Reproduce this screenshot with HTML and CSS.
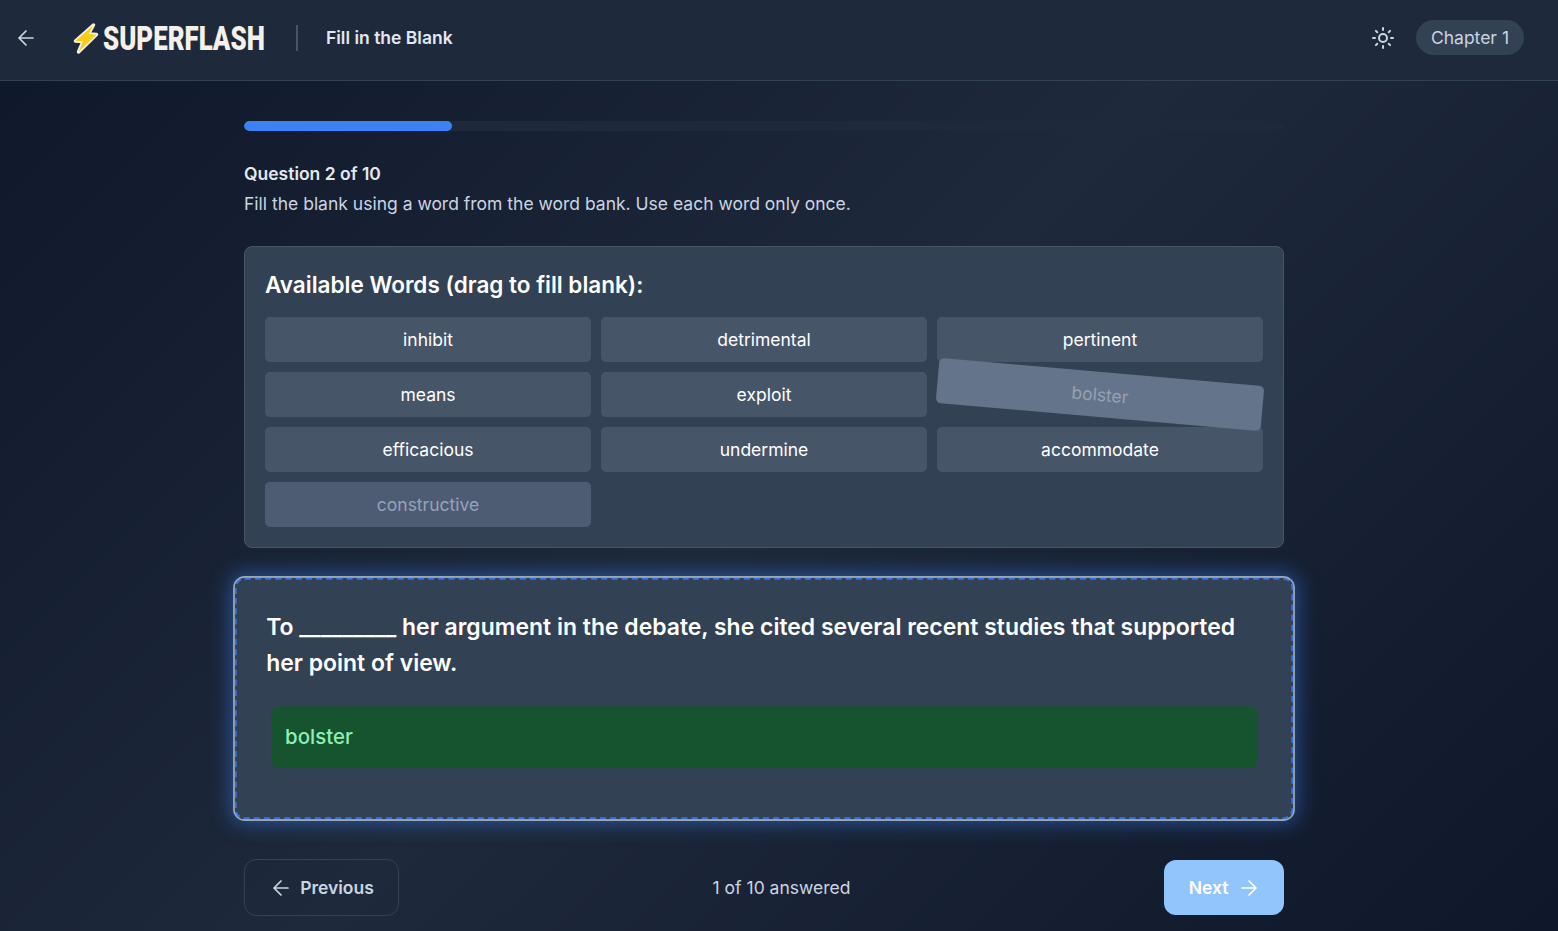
FILE: index.html
```html
<!DOCTYPE html>
<html lang="en">
<head>
<meta charset="utf-8">
<title>Fill in the Blank</title>
<link rel="stylesheet" href="styles.css">
</head>
<body>
<header class="topbar">
  <div class="topbar-left">
    <svg class="back-icon" viewBox="0 0 24 24" width="24" height="24"><path d="M19 12H5M12 19l-7-7 7-7"/></svg>
    <div class="logo">
      <svg class="bolt" viewBox="0 0 28 34" width="28" height="34"><path class="bolt-shape" d="M21.500 4 L3.500 20 L11 20.500 L6.500 31 L24.500 13.500 L16.500 13 Z"/></svg>
      <span class="logo-text">SUPERFLASH</span>
    </div>
    <span class="divider"></span>
    <span class="page-title">Fill in the Blank</span>
  </div>
  <div class="topbar-right">
    <svg class="sun-icon" viewBox="0 0 24 24" width="24" height="24"><circle cx="12" cy="12" r="4"/><path d="M12 2v2M12 20v2M4.900 4.900l1.400 1.400M17.700 17.700l1.400 1.400M2 12h2M20 12h2M6.300 17.700l-1.400 1.400M19.100 4.900l-1.400 1.400"/></svg>
    <span class="chapter">Chapter 1</span>
  </div>
</header>
<main class="content">
  <div class="progress"><div class="progress-fill"></div></div>
  <div class="question-head">
    <div class="question-num">Question 2 of 10</div>
    <div class="question-help">Fill the blank using a word from the word bank. Use each word only once.</div>
  </div>
  <section class="bank">
    <h2 class="bank-title">Available Words (drag to fill blank):</h2>
    <div class="word-grid">
      <div class="word">inhibit</div>
      <div class="word">detrimental</div>
      <div class="word">pertinent</div>
      <div class="word">means</div>
      <div class="word">exploit</div>
      <div class="word word-dragging">bolster</div>
      <div class="word">efficacious</div>
      <div class="word">undermine</div>
      <div class="word">accommodate</div>
      <div class="word word-used">constructive</div>
    </div>
  </section>
  <section class="dropzone">
    <p class="sentence">To _________ her argument in the debate, she cited several recent studies that supported her point of view.</p>
    <div class="answer">bolster</div>
  </section>
  <nav class="actions">
    <button class="btn btn-prev"><svg viewBox="0 0 24 24" width="24" height="24"><path d="M19 12H5M12 19l-7-7 7-7"/></svg>Previous</button>
    <span class="answered">1 of 10 answered</span>
    <button class="btn btn-next">Next<svg viewBox="0 0 24 24" width="24" height="24"><path d="M5 12h14M12 5l7 7-7 7"/></svg></button>
  </nav>
</main>
</body>
</html>
```
FILE: styles.css
```css
* { box-sizing: border-box; }
html, body { margin: 0; height: 100%; overflow: hidden; }
body {
  font-family: Inter, "Liberation Sans", sans-serif;
  background: linear-gradient(135deg, #0f172a 0%, #1e293b 50%, #0f172a 100%);
  color: #fff;
}
.topbar {
  height: 81px;
  display: flex;
  align-items: center;
  justify-content: space-between;
  padding: 0 34px 5px 14px;
  background: #1e293b;
  border-bottom: 1px solid #334155;
}
.topbar-left, .topbar-right { display: flex; align-items: center; }
.back-icon { fill: none; stroke: #cbd5e1; stroke-width: 1.700; stroke-linecap: round; stroke-linejoin: round; }
.logo { display: flex; align-items: center; margin-left: 34px; width: 194px; }
.bolt { flex: none; }
.bolt-shape { fill: #facc15; stroke: #f5f0e8; stroke-width: 3.500; stroke-linejoin: round; paint-order: stroke; }
.logo-text {
  font-family: Roboto, sans-serif;
  font-weight: 900;
  font-size: 34px;
  color: #f5f0e8;
  transform: scaleX(0.76);
  transform-origin: left center;
  margin-left: 3px;
  white-space: nowrap;
}
.divider { width: 2px; height: 26px; background: #475569; margin-left: 30px; }
.page-title { font-size: 17.500px; font-weight: 600; color: #e2e8f0; margin-left: 28px; }
.sun-icon { fill: none; stroke: #cbd5e1; stroke-width: 2; stroke-linecap: round; margin-right: 21px; }
.chapter {
  height: 35px;
  padding: 0 15px;
  display: flex;
  align-items: center;
  border-radius: 18px;
  background: #334155;
  color: #cbd5e1;
  font-size: 17.500px;
}
.content { width: 1040px; margin: 0 0 0 244px; padding-top: 40px; }
.progress { height: 10px; border-radius: 5px; background: #1e293b; overflow: hidden; }
.progress-fill { width: 20%; height: 100%; background: #3b82f6; border-radius: 5px; }
.question-head { margin-top: 31px; }
.question-num { font-size: 17.500px; font-weight: 600; color: #e2e8f0; line-height: 24px; }
.question-help { font-size: 17.500px; color: #cbd5e1; line-height: 24px; margin-top: 6px; }
.bank {
  margin-top: 30px;
  height: 302px;
  padding: 20px;
  background: #334155;
  border: 1px solid #475569;
  border-radius: 8px;
}
.bank-title { margin: 0 0 14px; font-size: 22.500px; font-weight: 600; line-height: 36px; }
.word-grid { display: grid; grid-template-columns: repeat(3, 1fr); gap: 10px; }
.word {
  height: 45px;
  display: flex;
  align-items: center;
  justify-content: center;
  background: #475569;
  border-radius: 5px;
  color: #fff;
  font-size: 17.500px;
}
.word-dragging { background: #64748b; color: #97a1b1; transform: rotate(5deg); }
.word-used { background: #4e5c73; color: #94a3b8; }
.dropzone {
  margin: 32px 1px 0;
  height: 237px;
  padding: 27.500px 29px 29px;
  background: #334155;
  border: 2px dashed #3574de;
  border-radius: 10px;
  box-shadow: 0 0 0 1.500px #9aa7b8, 0 0 20px 3px rgba(59, 130, 246, 0.5);
  transform: scale(1.02);
}
.sentence { margin: 0; font-size: 22.500px; font-weight: 600; line-height: 36.500px; }
.answer {
  margin: 23.500px 4.500px 0;
  height: 60.500px;
  padding: 0 14px;
  display: flex;
  align-items: center;
  background: #16532f;
  color: #8ff0b5;
  border-radius: 8px;
  font-size: 20px;
  font-weight: 500;
}
.actions { margin-top: 42px; display: flex; align-items: center; justify-content: space-between; }
.btn {
  display: flex;
  align-items: center;
  font-family: inherit;
  font-size: 17.500px;
  font-weight: 600;
  border-radius: 12px;
}
.btn svg { fill: none; stroke: currentColor; stroke-width: 1.700; stroke-linecap: round; stroke-linejoin: round; }
.btn-prev {
  width: 155px;
  height: 57px;
  justify-content: center;
  gap: 7px;
  background: transparent;
  border: 1px solid #334155;
  color: #cbd5e1;
}
.btn-next {
  width: 120px;
  height: 55px;
  justify-content: center;
  gap: 9px;
  padding: 0 0 0 2px;
  background: #93c5fd;
  border: 0;
  color: #fff;
}
.answered { font-size: 17.500px; color: #cbd5e1; }
```
